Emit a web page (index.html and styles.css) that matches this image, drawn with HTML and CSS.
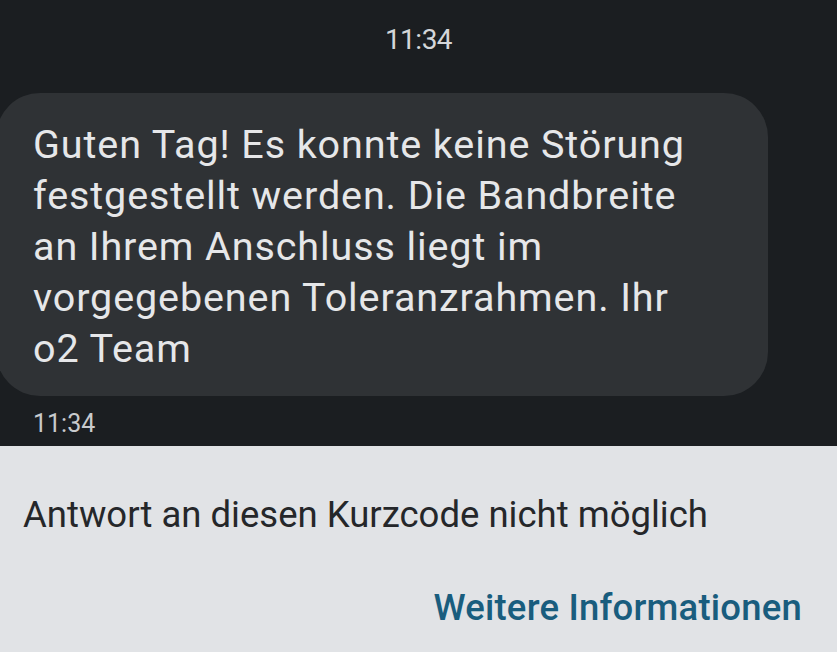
FILE: index.html
```html
<!DOCTYPE html>
<html lang="de">
<head>
<meta charset="utf-8">
<link rel="stylesheet" href="styles.css">
</head>
<body>
<div class="screen">
  <main class="chat">
    <div class="stamp">11:34</div>
    <div class="bubble">Guten Tag! Es konnte keine Störung<br>festgestellt werden. Die Bandbreite<br>an Ihrem Anschluss liegt im<br>vorgegebenen Toleranzrahmen. Ihr<br>o2 Team</div>
    <div class="msg-time">11:34</div>
  </main>
  <footer class="notice">
    <p class="notice-text">Antwort an diesen Kurzcode nicht möglich</p>
    <a class="notice-link">Weitere Informationen</a>
  </footer>
</div>
</body>
</html>
```

FILE: styles.css
```css
html, body {
  margin: 0;
  padding: 0;
  height: 100%;
  overflow: hidden;
}
body {
  font-family: Roboto, "Noto Sans", sans-serif;
  background: #1b1e21;
}
.screen {
  display: flex;
  flex-direction: column;
  height: 652px;
}
.chat {
  display: flex;
  flex-direction: column;
  height: 446px;
  box-sizing: border-box;
}
.stamp {
  color: #d4d6d9;
  font-size: 28px;
  text-align: center;
  padding-top: 22px;
  line-height: 36px;
  letter-spacing: -0.5px;
}
.bubble {
  margin-top: 35px;
  margin-left: -4px;
  width: 772px;
  box-sizing: border-box;
  background: #2f3235;
  border-radius: 44px;
  padding: 26px 40px 22px 37px;
  color: #e6e7e9;
  font-size: 39.5px;
  line-height: 51px;
  letter-spacing: 0.9px;
  white-space: nowrap;
}
.msg-time {
  color: #c8cacd;
  font-size: 25px;
  padding-left: 33px;
  padding-top: 11px;
  line-height: 34px;
}
.notice {
  flex: 1;
  background: #e1e3e6;
  display: flex;
  flex-direction: column;
  padding: 47px 35px 0 23px;
}
.notice-text {
  margin: 0;
  font-size: 36.5px;
  line-height: 44px;
  color: #25272a;
}
.notice-link {
  align-self: flex-end;
  margin-top: 49px;
  font-size: 36.5px;
  line-height: 44px;
  font-weight: 500;
  color: #195d7e;
  letter-spacing: 0.2px;
}
```
